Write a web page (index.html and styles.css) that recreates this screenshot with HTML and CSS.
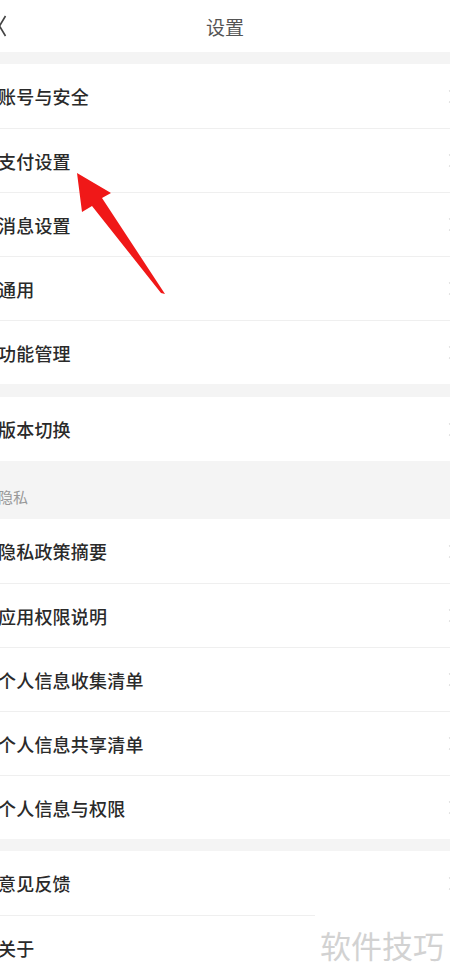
FILE: index.html
```html
<!DOCTYPE html>
<html lang="zh-CN">

<head>
    <meta charset="UTF-8">
    <meta name="viewport" content="width=device-width, initial-scale=1.0">
    <title>设置</title>
    <link rel="stylesheet" href="styles.css">
</head>

<body>
    <div class="page">
        <header class="topbar">
            <svg class="back" width="10" height="24" viewBox="0 0 10 24">
                <path d="M6.5 1 L0.5 11 L6.5 21" fill="none" stroke="#444" stroke-width="1.6" />
            </svg>
            <h1 class="title">设置</h1>
        </header>

        <div class="gap"></div>
        <div class="group">
            <div class="row"><span class="label">账号与安全</span><span class="arrow"></span></div>
            <div class="row"><span class="label">支付设置</span><span class="arrow"></span></div>
            <div class="row"><span class="label">消息设置</span><span class="arrow"></span></div>
            <div class="row"><span class="label">通用</span><span class="arrow"></span></div>
            <div class="row"><span class="label">功能管理</span><span class="arrow"></span></div>
        </div>

        <div class="gap gap-wide"></div>
        <div class="group">
            <div class="row"><span class="label">版本切换</span><span class="arrow"></span></div>
        </div>

        <div class="section-title">隐私</div>
        <div class="group">
            <div class="row"><span class="label">隐私政策摘要</span><span class="arrow"></span></div>
            <div class="row"><span class="label">应用权限说明</span><span class="arrow"></span></div>
            <div class="row"><span class="label">个人信息收集清单</span><span class="arrow"></span></div>
            <div class="row"><span class="label">个人信息共享清单</span><span class="arrow"></span></div>
            <div class="row"><span class="label">个人信息与权限</span><span class="arrow"></span></div>
        </div>

        <div class="gap"></div>
        <div class="group">
            <div class="row"><span class="label">意见反馈</span><span class="arrow"></span></div>
            <div class="row"><span class="label">关于</span></div>
        </div>

        <!-- annotation arrow drawn over the screenshot -->
        <svg class="pointer" width="450" height="974" viewBox="0 0 450 974">
            <polygon points="77,173 111,193 102,198 165,294 161,293 92,206 82,212" fill="#f01818" />
        </svg>

        <div class="watermark">软件技巧</div>
    </div>
</body>

</html>
```

FILE: styles.css
```css
body {
    margin: 0;
    background-color: #fff;
    font-family: "Noto Sans CJK SC", "Noto Sans", sans-serif;
}

.page {
    position: relative;
    width: 450px;
    height: 974px;
    overflow: hidden;
}

.topbar {
    height: 52px;
    display: flex;
    align-items: center;
    justify-content: center;
    position: relative;
}

.back {
    position: absolute;
    left: -1px;
    top: 15px;
}

.title {
    margin: 0;
    font-size: 19px;
    font-weight: normal;
    color: #555;
}

.gap {
    height: 12px;
    background-color: #f4f4f4;
}

.gap-wide {
    height: 13px;
}

.section-title {
    height: 58px;
    box-sizing: border-box;
    padding: 24px 0 0 0;
    margin-left: -2px;
    background-color: #f4f4f4;
    font-size: 15px;
    line-height: 24px;
    color: #999;
}

.row {
    height: 64px;
    box-sizing: border-box;
    display: flex;
    align-items: center;
    justify-content: space-between;
    border-top: 1px solid #efefef;
}

.row:first-child {
    border-top: none;
}

.label {
    margin-left: -2px;
    font-size: 18px;
    font-weight: 500;
    letter-spacing: 0.2px;
    color: #2a2a2a;
}

.arrow {
    width: 8px;
    height: 8px;
    border-top: 1.5px solid #ccc;
    border-right: 1.5px solid #ccc;
    transform: rotate(45deg);
    margin-right: -4px;
}

.pointer {
    position: absolute;
    left: 0;
    top: 0;
}

.watermark {
    position: absolute;
    right: 0;
    bottom: 0;
    width: 135px;
    height: 59px;
    box-sizing: border-box;
    padding-left: 5px;
    background-color: #fff;
    font-size: 31px;
    line-height: 59px;
    color: #d2d2d2;
}
```
